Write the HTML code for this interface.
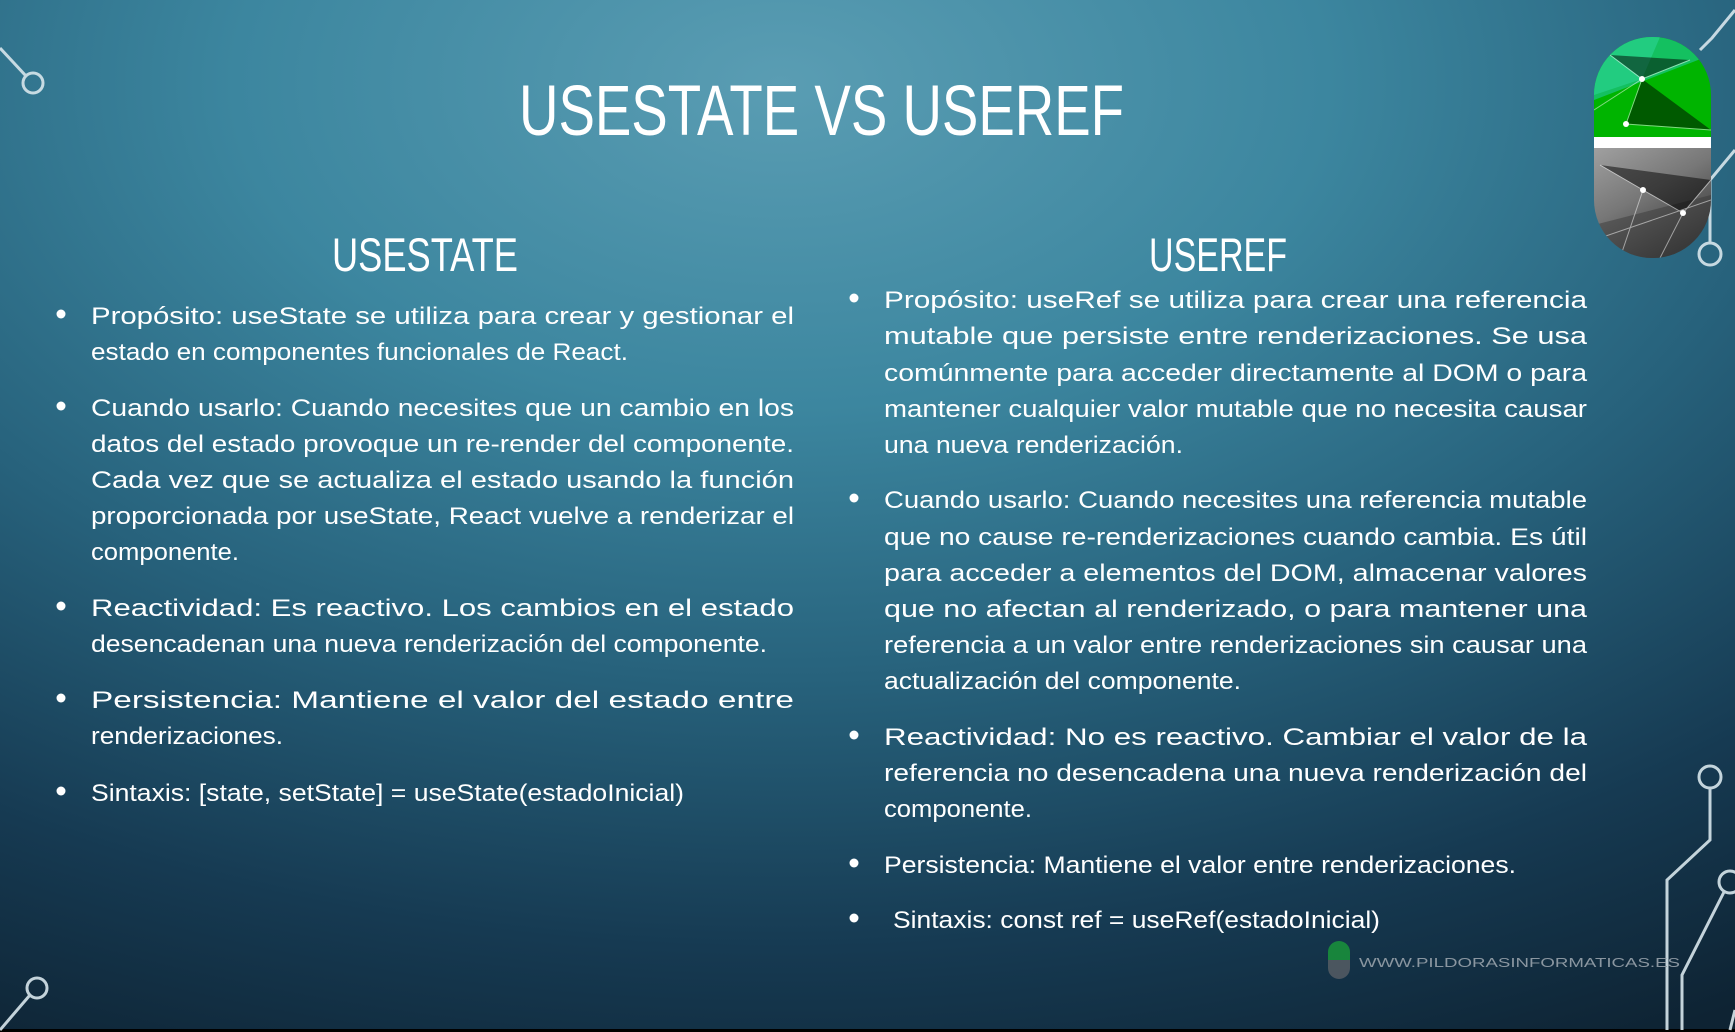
<!DOCTYPE html>
<html><head><meta charset="utf-8"><style>
html,body{margin:0;padding:0;width:1735px;height:1032px;overflow:hidden;background:#0f2536}
svg{display:block}
text{font-family:"Liberation Sans",sans-serif;fill:#fff}
</style></head><body>
<svg width="1735" height="1032" viewBox="0 0 1735 1032" xmlns="http://www.w3.org/2000/svg">
<defs>
<radialGradient id="bg" cx="0.45" cy="0.08" r="1.05" fx="0.45" fy="0.08">
<stop offset="0" stop-color="#5a9db3"/>
<stop offset="0.3" stop-color="#3c869f"/>
<stop offset="0.55" stop-color="#27627c"/>
<stop offset="0.8" stop-color="#163a52"/>
<stop offset="1" stop-color="#0e2333"/>
</radialGradient>
<linearGradient id="gray" x1="0" y1="0" x2="0.6" y2="1">
<stop offset="0" stop-color="#a0a0a0"/><stop offset="0.5" stop-color="#777"/><stop offset="1" stop-color="#3a3a3a"/>
</linearGradient>
<clipPath id="pill"><rect x="1594" y="37" width="117" height="221" rx="58"/></clipPath>
<clipPath id="pill2"><rect x="1328" y="941" width="22" height="38" rx="11"/></clipPath>
</defs>
<rect width="1735" height="1032" fill="url(#bg)"/>
<rect y="1029" width="1735" height="3" fill="#000"/>

<g stroke="#d8e6ec" stroke-width="3" fill="none" opacity="0.9">
<path d="M0 48 L26 76"/><circle cx="33" cy="83" r="10"/>
<path d="M0 1030 L30 995"/><circle cx="37" cy="988" r="10"/>
<path d="M1735 10 L1712 38 L1700 50"/>
<path d="M1735 150 L1710 180 L1710 244"/><circle cx="1710" cy="254" r="11"/>
<circle cx="1710" cy="777" r="11"/><path d="M1710 788 L1710 840 L1667 880 L1667 1030"/>
<circle cx="1730" cy="882" r="11"/><path d="M1724 892 L1682 975 L1682 1030"/>
<path d="M1735 1010 L1730 1030"/>
</g>

<g clip-path="url(#pill)">
<rect x="1594" y="37" width="117" height="100" fill="#00b400"/>
<polygon points="1594,37 1711,37 1711,55 1594,100" fill="#14c060"/>
<polygon points="1594,37 1660,37 1642,79 1594,95" fill="#22cc80"/>
<rect x="1594" y="137" width="117" height="11" fill="#fff"/>
<rect x="1594" y="148" width="117" height="110" fill="url(#gray)"/>
<polygon points="1594,225 1711,195 1711,258 1594,258" fill="#3a3a3a" opacity="0.5"/>
<g stroke="#fff" stroke-width="1" opacity="0.5">
<path d="M1610 55 L1642 79 L1690 60"/><path d="M1642 79 L1626 124 L1711 130"/>
<path d="M1594 110 L1642 79"/><path d="M1600 165 L1643 190 L1683 213 L1711 180"/>
<path d="M1643 190 L1620 258"/><path d="M1683 213 L1660 258"/><path d="M1594 240 L1711 200"/>
</g>
<circle cx="1642" cy="79" r="3" fill="#fff"/><circle cx="1626" cy="124" r="3" fill="#fff"/>
<circle cx="1643" cy="190" r="3" fill="#fff"/><circle cx="1683" cy="213" r="3" fill="#fff"/>
</g>
<g clip-path="url(#pill2)" opacity="0.8">
<rect x="1328" y="941" width="22" height="19" fill="#1a9a3a"/>
<rect x="1328" y="960" width="22" height="19" fill="#5a5f66"/>
</g>
<text x="1359" y="967" font-size="13" textLength="321" lengthAdjust="spacingAndGlyphs" style="fill:#8a96a0">WWW.PILDORASINFORMATICAS.ES</text>

<text x="519" y="135" font-size="71" textLength="605" lengthAdjust="spacingAndGlyphs">USESTATE VS USEREF</text>
<text x="332" y="271" font-size="47" textLength="186" lengthAdjust="spacingAndGlyphs">USESTATE</text>
<text x="1149" y="271" font-size="47" textLength="138" lengthAdjust="spacingAndGlyphs">USEREF</text>

<g fill="#fff">
<circle cx="61" cy="314" r="4.5"/><circle cx="61" cy="406" r="4.5"/><circle cx="61" cy="606" r="4.5"/><circle cx="61" cy="698" r="4.5"/><circle cx="61" cy="791" r="4.5"/>
<circle cx="854" cy="298" r="4.5"/><circle cx="854" cy="498" r="4.5"/><circle cx="854" cy="735" r="4.5"/><circle cx="854" cy="863" r="4.5"/><circle cx="854" cy="918" r="4.5"/>
</g>

<g font-size="24">
<text x="91" y="324" textLength="703" lengthAdjust="spacingAndGlyphs">Propósito: useState se utiliza para crear y gestionar el</text>
<text x="91" y="360" textLength="537" lengthAdjust="spacingAndGlyphs">estado en componentes funcionales de React.</text>
<text x="91" y="416" textLength="703" lengthAdjust="spacingAndGlyphs">Cuando usarlo: Cuando necesites que un cambio en los</text>
<text x="91" y="452" textLength="703" lengthAdjust="spacingAndGlyphs">datos del estado provoque un re-render del componente.</text>
<text x="91" y="488" textLength="703" lengthAdjust="spacingAndGlyphs">Cada vez que se actualiza el estado usando la función</text>
<text x="91" y="524" textLength="703" lengthAdjust="spacingAndGlyphs">proporcionada por useState, React vuelve a renderizar el</text>
<text x="91" y="560" textLength="148" lengthAdjust="spacingAndGlyphs">componente.</text>
<text x="91" y="616" textLength="703" lengthAdjust="spacingAndGlyphs">Reactividad: Es reactivo. Los cambios en el estado</text>
<text x="91" y="652" textLength="676" lengthAdjust="spacingAndGlyphs">desencadenan una nueva renderización del componente.</text>
<text x="91" y="708" textLength="703" lengthAdjust="spacingAndGlyphs">Persistencia: Mantiene el valor del estado entre</text>
<text x="91" y="744" textLength="192" lengthAdjust="spacingAndGlyphs">renderizaciones.</text>
<text x="91" y="801" textLength="593" lengthAdjust="spacingAndGlyphs">Sintaxis: [state, setState] = useState(estadoInicial)</text>

<text x="884" y="308" textLength="703" lengthAdjust="spacingAndGlyphs">Propósito: useRef se utiliza para crear una referencia</text>
<text x="884" y="344" textLength="703" lengthAdjust="spacingAndGlyphs">mutable que persiste entre renderizaciones. Se usa</text>
<text x="884" y="381" textLength="703" lengthAdjust="spacingAndGlyphs">comúnmente para acceder directamente al DOM o para</text>
<text x="884" y="417" textLength="703" lengthAdjust="spacingAndGlyphs">mantener cualquier valor mutable que no necesita causar</text>
<text x="884" y="453" textLength="299" lengthAdjust="spacingAndGlyphs">una nueva renderización.</text>
<text x="884" y="508" textLength="703" lengthAdjust="spacingAndGlyphs">Cuando usarlo: Cuando necesites una referencia mutable</text>
<text x="884" y="545" textLength="703" lengthAdjust="spacingAndGlyphs">que no cause re-renderizaciones cuando cambia. Es útil</text>
<text x="884" y="581" textLength="703" lengthAdjust="spacingAndGlyphs">para acceder a elementos del DOM, almacenar valores</text>
<text x="884" y="617" textLength="703" lengthAdjust="spacingAndGlyphs">que no afectan al renderizado, o para mantener una</text>
<text x="884" y="653" textLength="703" lengthAdjust="spacingAndGlyphs">referencia a un valor entre renderizaciones sin causar una</text>
<text x="884" y="689" textLength="357" lengthAdjust="spacingAndGlyphs">actualización del componente.</text>
<text x="884" y="745" textLength="703" lengthAdjust="spacingAndGlyphs">Reactividad: No es reactivo. Cambiar el valor de la</text>
<text x="884" y="781" textLength="703" lengthAdjust="spacingAndGlyphs">referencia no desencadena una nueva renderización del</text>
<text x="884" y="817" textLength="148" lengthAdjust="spacingAndGlyphs">componente.</text>
<text x="884" y="873" textLength="632" lengthAdjust="spacingAndGlyphs">Persistencia: Mantiene el valor entre renderizaciones.</text>
<text x="893" y="928" textLength="487" lengthAdjust="spacingAndGlyphs">Sintaxis: const ref = useRef(estadoInicial)</text>
</g>
</svg>
</body></html>
